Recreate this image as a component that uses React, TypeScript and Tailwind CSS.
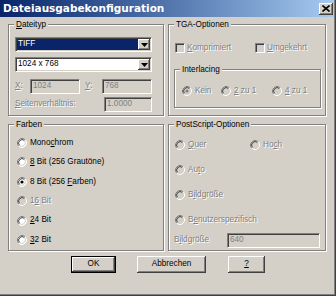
import React from "react";

const sunken =
  "border border-t-[#808080] border-l-[#808080] border-b-white border-r-white shadow-[inset_1px_1px_0_#404040,inset_-1px_-1px_0_#d4d0c8]";
const raised =
  "shadow-[inset_-1px_-1px_0_#404040,inset_1px_1px_0_#fff,inset_-2px_-2px_0_#808080,inset_2px_2px_0_#d4d0c8]";
const grayText = "text-[#808080] [text-shadow:1px_1px_0_#fff]";

// "&Dateityp" -> D underlined, like a Windows resource string
function Amp({ text }: { text: string }) {
  const i = text.indexOf("&");
  if (i < 0) return <>{text}</>;
  return (
    <>
      {text.slice(0, i)}
      <u className="underline-offset-1">{text[i + 1]}</u>
      {text.slice(i + 2)}
    </>
  );
}

function Group({
  label,
  className = "",
  children,
}: {
  label: string;
  className?: string;
  children?: React.ReactNode;
}) {
  return (
    <div
      className={`relative border border-[#808080] shadow-[inset_1px_1px_0_#fff,1px_1px_0_#fff] ${className}`}
    >
      <span className="absolute left-[5px] top-[-6px] bg-[#d4d0c8] px-[2px] leading-[11px]">
        <Amp text={label} />
      </span>
      {children}
    </div>
  );
}

function Radio({
  label,
  on,
  off,
}: {
  label: string;
  on?: boolean;
  off?: boolean;
}) {
  return (
    <div className="flex items-center gap-[3px] h-[10px]">
      <svg width="10" height="10" viewBox="0 0 10 10" className="shrink-0">
        <circle cx="5" cy="5" r="4" fill={off ? "#d4d0c8" : "#fff"} />
        <path d="M1.82 8.18A4.5 4.5 0 0 1 8.18 1.82" stroke="#808080" fill="none" />
        <path d="M8.18 1.82A4.5 4.5 0 0 1 1.82 8.18" stroke="#fff" fill="none" />
        <path d="M2.53 7.47A3.5 3.5 0 0 1 7.47 2.53" stroke="#404040" fill="none" />
        <path d="M7.47 2.53A3.5 3.5 0 0 1 2.53 7.47" stroke="#d4d0c8" fill="none" />
        {on && <circle cx="5" cy="5" r="1.6" fill={off ? "#808080" : "#000"} />}
      </svg>
      <span className={`leading-none whitespace-nowrap ${off ? grayText : ""}`}>
        <Amp text={label} />
      </span>
    </div>
  );
}

function Check({ label }: { label: string }) {
  return (
    <div className="flex items-center gap-[2px] h-[10px]">
      <span className={`w-[10px] h-[10px] shrink-0 bg-[#d4d0c8] ${sunken}`} />
      <span className={`leading-none whitespace-nowrap ${grayText}`}>
        <Amp text={label} />
      </span>
    </div>
  );
}

function TextBox({ value, className = "" }: { value: string; className?: string }) {
  return (
    <div
      className={`h-[15px] flex items-center pl-[2px] bg-[#d4d0c8] text-[#808080] leading-none ${sunken} ${className}`}
    >
      {value}
    </div>
  );
}

function Combo({ value, focused }: { value: string; focused?: boolean }) {
  return (
    <div className={`flex h-[15px] w-[137px] p-[1px] bg-white ${sunken}`}>
      <div
        className={`flex-1 flex items-center pl-[1px] leading-none ${
          focused ? "bg-[#0a246a] text-white" : "bg-white"
        }`}
      >
        {value}
      </div>
      <div className={`w-[12px] flex items-center justify-center bg-[#d4d0c8] ${raised}`}>
        <svg width="7" height="4" viewBox="0 0 7 4">
          <path d="M0 0h7L3.5 4z" fill="#000" />
        </svg>
      </div>
    </div>
  );
}

function Button({
  label,
  width,
  isDefault,
}: {
  label: string;
  width: string;
  isDefault?: boolean;
}) {
  return (
    <div
      className={`${width} h-[17px] flex items-center justify-center leading-none bg-[#d4d0c8] ${raised} ${
        isDefault ? "border border-black" : ""
      }`}
    >
      <Amp text={label} />
    </div>
  );
}

export default function App() {
  return (
    <div className="w-[336px] h-[296px] bg-[#d4d0c8] overflow-hidden shadow-[inset_-1px_-1px_0_#404040,inset_-2px_-2px_0_#808080] font-['Liberation_Sans',Arial,sans-serif] text-[8.2px] text-black">
      {/* Title bar */}
      <div className="w-[334px] h-[17px] flex items-center justify-between bg-linear-to-r from-[#0a246a] to-[#a6caf0] pl-[3px] pr-[1px]">
        <span className="font-['DejaVu_Sans',sans-serif] font-bold text-[10.5px] text-white leading-none">
          Dateiausgabekonfiguration
        </span>
        <div className={`w-[14px] h-[12px] flex items-center justify-center bg-[#d4d0c8] ${raised}`}>
          <svg width="8" height="7" viewBox="0 0 8 7">
            <path d="M0.5 0.5L7.5 6.5M7.5 0.5L0.5 6.5" stroke="#000" strokeWidth="1.6" />
          </svg>
        </div>
      </div>

      <div className="grid grid-cols-[156px_158px] gap-x-[4px] gap-y-[8px] pl-[8px] pt-[7px]">
        {/* Dateityp */}
        <Group label="&Dateityp" className="h-[92px] pl-[6px] pt-[12px]">
          <Combo value="TIFF" focused />
          <div className="mt-[5px]">
            <Combo value="1024 x 768" />
          </div>
          <div className="mt-[7px] w-[137px] flex items-center">
            <span className={`w-[15px] leading-none ${grayText}`}>
              <Amp text="&X:" />
            </span>
            <TextBox value="1024" className="w-[50px]" />
            <span className={`ml-[5px] w-[17px] leading-none ${grayText}`}>
              <Amp text="&Y:" />
            </span>
            <TextBox value="768" className="w-[50px]" />
          </div>
          <div className="mt-[3px] w-[137px] flex items-center justify-between">
            <span className={`leading-none ${grayText}`}>
              <Amp text="&Seitenverhältnis:" />
            </span>
            <TextBox value="1.0000" className="w-[48px]" />
          </div>
        </Group>

        {/* TGA-Optionen */}
        <Group label="TGA-Optionen" className="h-[92px] pl-[5px] pt-[18px]">
          <div className="flex pl-[1px]">
            <div className="w-[80px]">
              <Check label="&Komprimiert" />
            </div>
            <Check label="&Umgekehrt" />
          </div>
          <Group label="Interlacing" className="mt-[16px] w-[147px] h-[39px] pl-[7px] pt-[16px]">
            <div className="flex">
              <div className="w-[39px]">
                <Radio label="Kein" on off />
              </div>
              <div className="w-[51px]">
                <Radio label="&2 zu 1" off />
              </div>
              <Radio label="&4 zu 1" off />
            </div>
          </Group>
        </Group>

        {/* Farben */}
        <Group label="Farben" className="h-[127px] pl-[8px] pt-[13px]">
          <div className="flex flex-col gap-[9.4px]">
            <Radio label="Mono&chrom" />
            <Radio label="&8 Bit (256 Grautöne)" />
            <Radio label="8 Bit (256 &Farben)" on />
            <Radio label="1&6 Bit" off />
            <Radio label="&24 Bit" />
            <Radio label="&32 Bit" />
          </div>
        </Group>

        {/* PostScript-Optionen */}
        <Group label="PostScript-Optionen" className="h-[127px] pl-[6px] pt-[15px]">
          <div className="flex flex-col gap-[15px]">
            <div className="flex">
              <div className="w-[75px]">
                <Radio label="&Quer" off />
              </div>
              <Radio label="Ho&ch" off />
            </div>
            <Radio label="Au&to" off />
            <Radio label="B&ildgröße" off />
            <Radio label="B&enutzerspezifisch" off />
          </div>
          <div className="mt-[8px] flex items-center w-[146px] justify-between -ml-[1px]">
            <span className={`leading-none ${grayText}`}>
              B<u>i</u>ldgröße
            </span>
            <TextBox value="640" className="w-[93px]" />
          </div>
        </Group>
      </div>

      {/* Buttons */}
      <div className="flex mt-[5px] pl-[71px]">
        <Button label="OK" width="w-[45px]" isDefault />
        <div className="ml-[21px]">
          <Button label="Abbrechen" width="w-[69px]" />
        </div>
        <div className="ml-[22px]">
          <Button label="&?" width="w-[37px]" />
        </div>
      </div>
    </div>
  );
}
